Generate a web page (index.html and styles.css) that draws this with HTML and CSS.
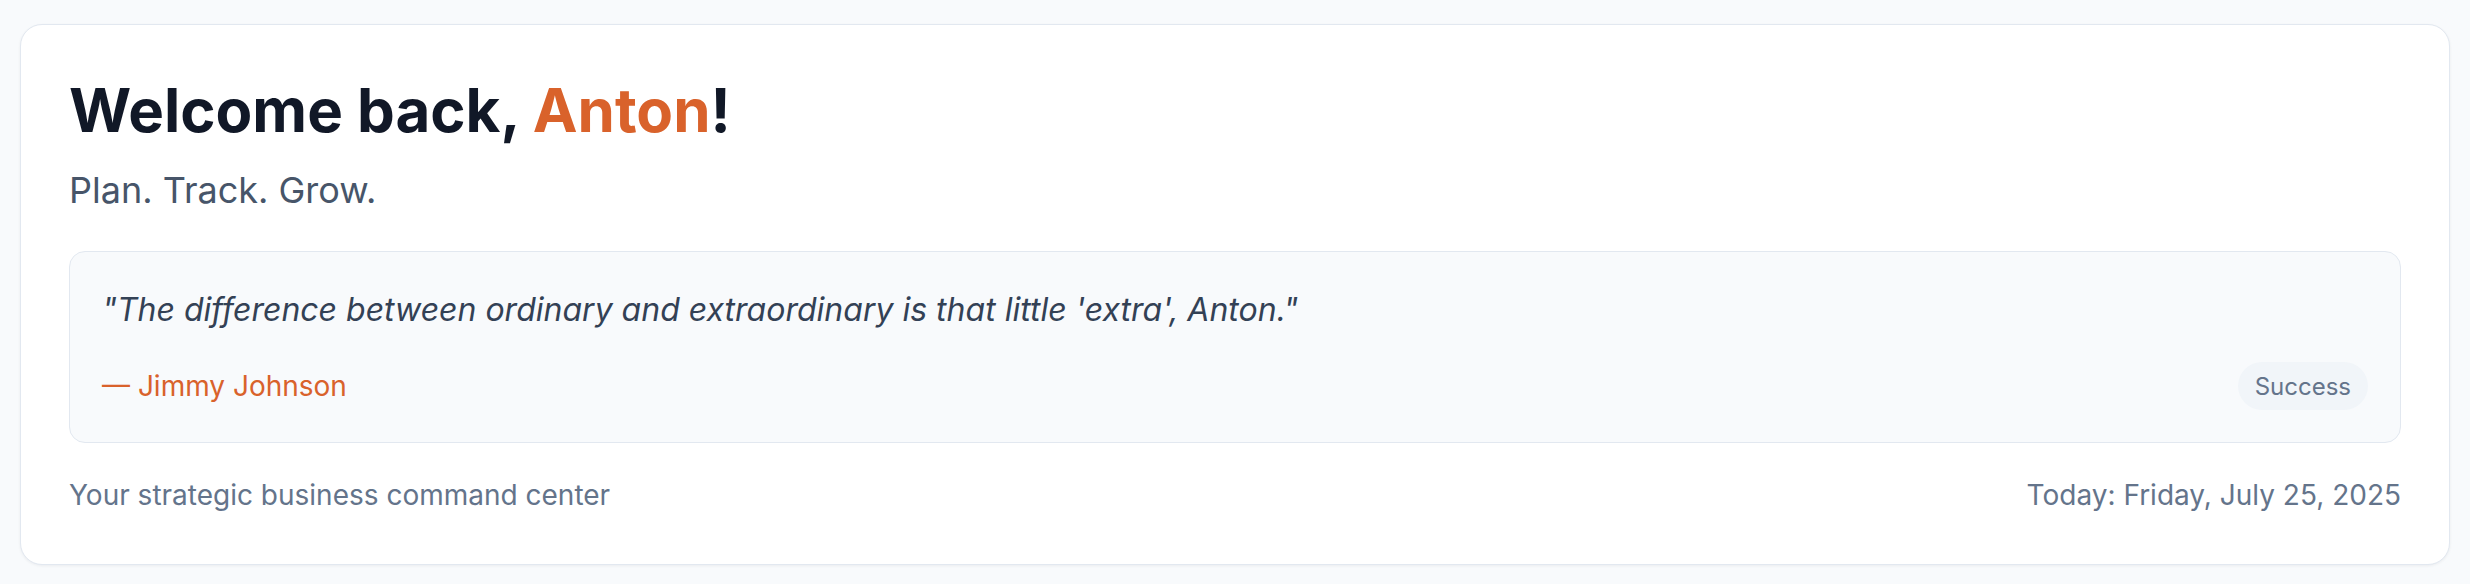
FILE: index.html
```html
<!DOCTYPE html>
<html lang="en">
<head>
<meta charset="utf-8">
<title>Dashboard</title>
<link rel="stylesheet" href="styles.css">
</head>
<body>
  <main class="page">
    <section class="welcome-card">
      <h1 class="welcome-title">Welcome back, <span class="accent">Anton</span>!</h1>
      <p class="welcome-subtitle">Plan. Track. Grow.</p>
      <div class="quote-box">
        <p class="quote-text">"The difference between ordinary and extraordinary is that little 'extra', Anton."</p>
        <div class="quote-meta">
          <span class="quote-author">— Jimmy Johnson</span>
          <span class="quote-tag">Success</span>
        </div>
      </div>
      <div class="card-footer">
        <span class="footer-note">Your strategic business command center</span>
        <span class="footer-date">Today: Friday, July 25, 2025</span>
      </div>
    </section>
  </main>
</body>
</html>
```

FILE: styles.css
```css
* { box-sizing: border-box; }
html, body { margin: 0; padding: 0; }
body {
  background: #f8fafc;
  font-family: Inter, "Noto Sans", "Liberation Sans", sans-serif;
  color: #111827;
}
.page {
  padding: 24px 20px 22px;
}
.welcome-card {
  background: #ffffff;
  border: 1px solid #e2e8f0;
  border-radius: 22px;
  box-shadow: 0 1px 3px rgba(15, 23, 42, 0.06);
  padding: 48px 48px 49px;
  display: flex;
  flex-direction: column;
}
.welcome-title {
  margin: 0;
  font-size: 60px;
  line-height: 75px;
  font-weight: 700;
  color: #111827;
}
.accent { color: #d9622b; }
.welcome-subtitle {
  margin: 22px 0 0;
  font-size: 36px;
  line-height: 40px;
  color: #475569;
}
.quote-box {
  margin-top: 41px;
  background: #f8fafc;
  border: 1px solid #e2e8f0;
  border-radius: 16px;
  padding: 32px;
}
.quote-text {
  margin: 0;
  font-size: 32px;
  line-height: 52px;
  font-style: italic;
  color: #334155;
}
.quote-meta {
  margin-top: 26px;
  display: flex;
  align-items: center;
  justify-content: space-between;
}
.quote-author {
  font-size: 28px;
  color: #d9622b;
  font-weight: 400;
}
.quote-tag {
  display: inline-flex;
  align-items: center;
  height: 48px;
  padding: 0 17px;
  border-radius: 24px;
  background: #f1f5f9;
  color: #64748b;
  font-size: 24px;
}
.card-footer {
  margin-top: 32px;
  display: flex;
  justify-content: space-between;
  align-items: center;
  font-size: 28px;
  line-height: 40px;
  color: #64748b;
}
```
